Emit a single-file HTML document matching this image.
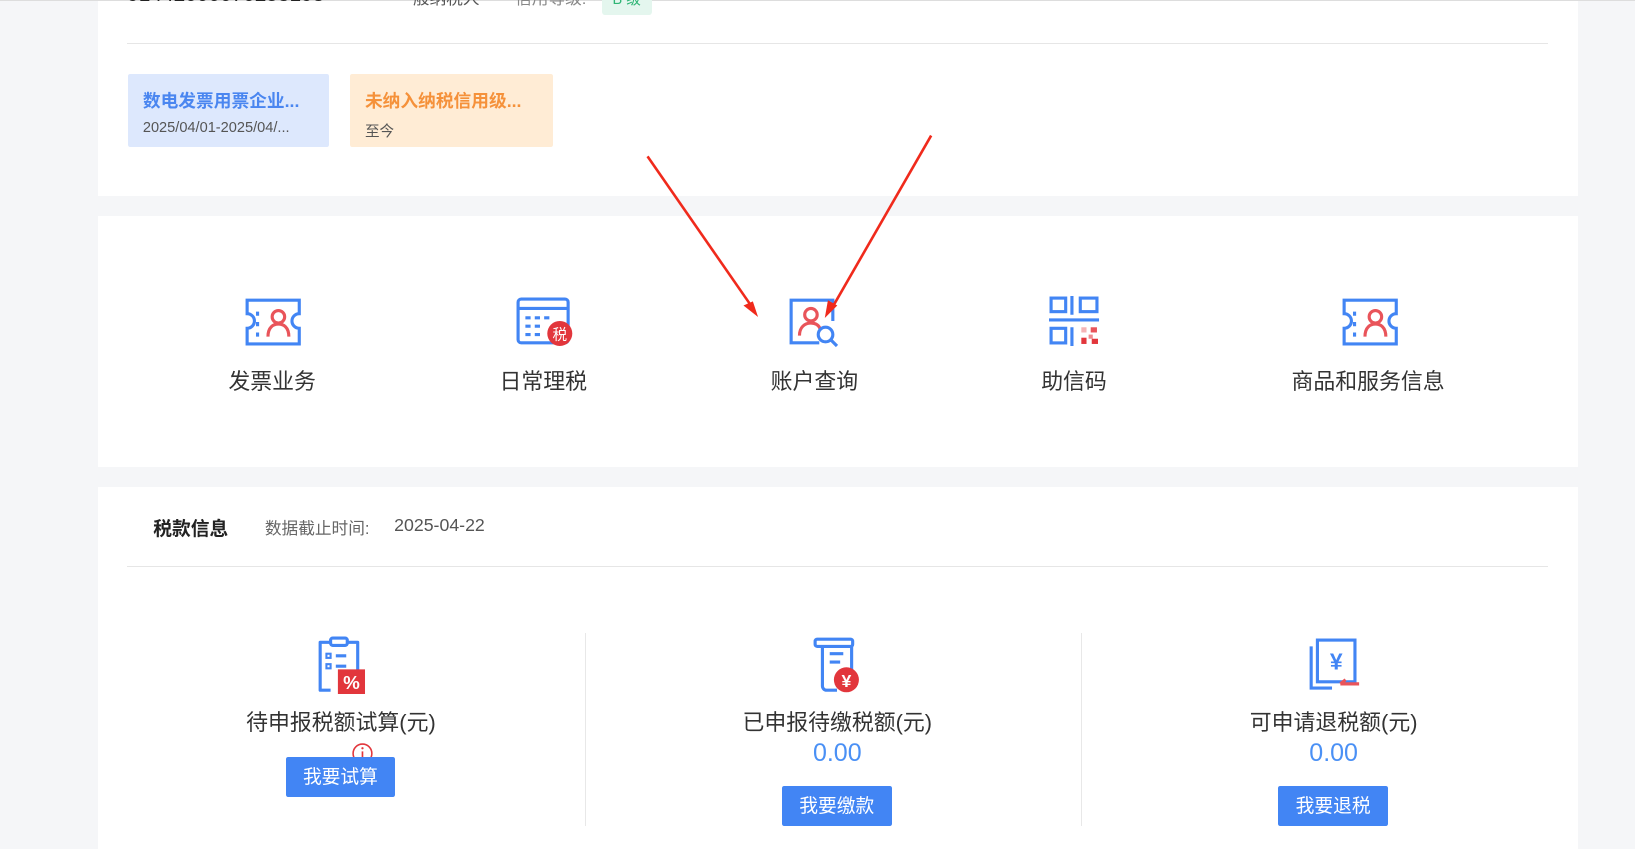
<!DOCTYPE html>
<html><head><meta charset="utf-8"><style>
html,body{margin:0;padding:0;background:#f5f6f8;overflow:hidden}
body{width:1635px;height:849px}
#w{zoom:1.04273;position:relative;width:1568px;height:814px;font-family:"Liberation Sans","Noto Sans CJK SC",sans-serif;color:#333}
.p{position:absolute;left:94px;width:1419px;background:#fff}
.a{position:absolute}
.lbl{position:absolute;font-size:21px;color:#333;text-align:center;width:200px}
.btn{position:absolute;background:#4285f4;color:#fff;font-size:18px;width:105px;height:38px;line-height:38px;text-align:center;border-radius:2px}
.num{position:absolute;color:#4a90f5;font-size:24px;width:200px;text-align:center}
</style></head><body><div id="w">
<div style="position:absolute;left:0;top:0;width:1568px;height:1px;background:#ddd"></div>
<div class="p" style="top:1px;height:187px">
 <div class="a" style="left:28px;top:-17px;font-size:20px;color:#222">91442000070253193</div>
 <div class="a" style="left:286px;top:-15px;font-size:16px;color:#555">一般纳税人</div>
 <div class="a" style="left:400px;top:-15px;font-size:16px;color:#888">信用等级:</div>
 <div class="a" style="left:483px;top:-6px;width:48px;height:19px;background:#e4f6ee;border-radius:3px;color:#2fb575;font-size:14px;text-align:center;line-height:10px">B 级</div>
 <div class="a" style="left:28px;top:40px;width:1363px;height:1px;background:#e6e6e6"></div>
 <div class="a" style="left:29px;top:70px;width:193px;height:70px;background:#dde8fd;border-radius:2px">
  <div class="a" style="left:14px;top:12px;font-size:17px;font-weight:bold;color:#4a86f0">数电发票用票企业...</div>
  <div class="a" style="left:14px;top:44px;font-size:14px;color:#555">2025/04/01-2025/04/...</div></div>
 <div class="a" style="left:242px;top:70px;width:194px;height:70px;background:#ffecd5;border-radius:2px">
  <div class="a" style="left:14px;top:12px;font-size:17px;font-weight:bold;color:#f5913a">未纳入纳税信用级...</div>
  <div class="a" style="left:14px;top:44px;font-size:14px;color:#555">至今</div></div>
</div>
<div class="p" style="top:207px;height:241px">
 <svg class="a" style="left:140px;top:78px" width="56" height="48" viewBox="0 0 56 48"><path d="M3 3h50v13a6 6 0 0 0 0 14v15H3V30a6 6 0 0 0 0-14z" fill="none" stroke="#4285f4" stroke-width="3"/><path d="M13 14v4M13 24v4M13 34v4" stroke="#4285f4" stroke-width="3"/><circle cx="33" cy="19" r="6" fill="none" stroke="#e9545a" stroke-width="3"/><path d="M23 38c0-9 5-12 10-12s10 3 10 12" fill="none" stroke="#e9545a" stroke-width="3"/></svg>
 <div class="lbl" style="left:67px;top:143px">发票业务</div>
 <svg class="a" style="left:401px;top:78px" width="56" height="50" viewBox="0 0 56 50"><rect x="2" y="2" width="48" height="42" rx="3" fill="none" stroke="#4285f4" stroke-width="3"/><path d="M2 11h48" stroke="#4285f4" stroke-width="3"/><path d="M9 20h5M18 20h5M27 20h5M9 28h5M18 28h5M9 36h5M18 36h5" stroke="#4285f4" stroke-width="3"/><circle cx="42" cy="35" r="12" fill="#e2363c"/><text x="42" y="41" font-size="14" fill="#fff" text-anchor="middle" font-family="Noto Sans CJK SC">税</text></svg>
 <div class="lbl" style="left:327px;top:143px">日常理税</div>
 <svg class="a" style="left:662px;top:78px" width="52" height="50" viewBox="0 0 52 50"><path d="M30 44H3V3h40v20" fill="none" stroke="#4285f4" stroke-width="3"/><circle cx="22" cy="17" r="6" fill="none" stroke="#e9545a" stroke-width="3"/><path d="M11 37c0-8 5-12 11-12s8 3 9 6" fill="none" stroke="#e9545a" stroke-width="3"/><circle cx="36" cy="36" r="7" fill="none" stroke="#4285f4" stroke-width="3"/><path d="M41 41l6 6" stroke="#4285f4" stroke-width="3"/></svg>
 <div class="lbl" style="left:587px;top:143px">账户查询</div>
 <svg class="a" style="left:912px;top:77px" width="50" height="50" viewBox="0 0 50 50"><rect x="2" y="2" width="14" height="13" fill="none" stroke="#4285f4" stroke-width="3"/><rect x="30" y="2" width="16" height="13" fill="none" stroke="#4285f4" stroke-width="3"/><path d="M22 0v18M22 30v18M0 23h48" stroke="#4285f4" stroke-width="3"/><rect x="2" y="31" width="14" height="14" fill="none" stroke="#4285f4" stroke-width="3"/><rect x="31" y="30" width="5" height="5" fill="#f5b4b6"/><rect x="40" y="30" width="6" height="5" fill="#e9545a"/><rect x="31" y="40" width="5" height="6" fill="#e2363c"/><rect x="38" y="37" width="4" height="4" fill="#f08a8e"/><rect x="41" y="41" width="6" height="5" fill="#e2363c"/></svg>
 <div class="lbl" style="left:836px;top:143px">助信码</div>
 <svg class="a" style="left:1192px;top:78px" width="56" height="48" viewBox="0 0 56 48"><path d="M3 3h50v13a6 6 0 0 0 0 14v15H3V30a6 6 0 0 0 0-14z" fill="none" stroke="#4285f4" stroke-width="3"/><path d="M13 14v4M13 24v4M13 34v4" stroke="#4285f4" stroke-width="3"/><circle cx="33" cy="19" r="6" fill="none" stroke="#e9545a" stroke-width="3"/><path d="M23 38c0-9 5-12 10-12s10 3 10 12" fill="none" stroke="#e9545a" stroke-width="3"/></svg>
 <div class="lbl" style="left:1118px;top:143px">商品和服务信息</div>
</div>
<div class="p" style="top:467px;height:347px">
 <div class="a" style="left:53px;top:26px;font-size:18px;font-weight:bold;color:#222">税款信息</div>
 <div class="a" style="left:160px;top:27px;font-size:16px;color:#666">数据截止时间:</div>
 <div class="a" style="left:284px;top:27px;font-size:17px;color:#555">2025-04-22</div>
 <div class="a" style="left:28px;top:76px;width:1363px;height:1px;background:#e6e6e6"></div>
 <div class="a" style="left:467px;top:140px;width:1px;height:185px;background:#e8e8e8"></div>
 <div class="a" style="left:943px;top:140px;width:1px;height:185px;background:#e8e8e8"></div>
 <svg class="a" style="left:209px;top:143px" width="48" height="56" viewBox="0 0 48 56"><path d="M14 52H4V6h36v30" fill="none" stroke="#4285f4" stroke-width="3" stroke-linejoin="round"/><rect x="14" y="2" width="16" height="7" rx="2" fill="#fff" stroke="#4285f4" stroke-width="3"/><rect x="10" y="17" width="4" height="4" fill="none" stroke="#4285f4" stroke-width="2"/><rect x="10" y="27" width="4" height="4" fill="none" stroke="#4285f4" stroke-width="2"/><path d="M19 19h10M19 29h10" stroke="#4285f4" stroke-width="3"/><rect x="21" y="32" width="26" height="24" fill="#e2363c"/><text x="34" y="51" font-size="18" fill="#fff" text-anchor="middle" font-weight="bold">%</text></svg>
 <div class="lbl" style="left:133px;top:210px;width:200px">待申报税额试算(元)</div>
 <svg class="a" style="left:243px;top:245px" width="22" height="22"><circle cx="11" cy="11" r="9" fill="none" stroke="#e2363c" stroke-width="1.5"/><path d="M11 9v7" stroke="#e2363c" stroke-width="1.6"/><circle cx="11" cy="6" r="1.1" fill="#e2363c"/></svg>
 <div class="btn" style="left:180px;top:259px">我要试算</div>
 <svg class="a" style="left:685px;top:143px" width="48" height="56" viewBox="0 0 48 56"><path d="M10 8v40a4 4 0 0 0 4 4h10M10 8h28v26" fill="none" stroke="#4285f4" stroke-width="3" stroke-linejoin="round"/><rect x="3" y="3" width="36" height="7" rx="2" fill="#fff" stroke="#4285f4" stroke-width="3"/><path d="M17 17h13M17 25h10" stroke="#4285f4" stroke-width="3"/><circle cx="33" cy="42" r="12" fill="#e2363c"/><text x="33" y="49" font-size="17" fill="#fff" text-anchor="middle" font-weight="bold">¥</text></svg>
 <div class="lbl" style="left:609px;top:210px">已申报待缴税额(元)</div>
 <div class="num" style="left:609px;top:242px">0.00</div>
 <div class="btn" style="left:656px;top:287px">我要缴款</div>
 <svg class="a" style="left:1159px;top:145px" width="54" height="52" viewBox="0 0 54 52"><path d="M4 8v40h20" fill="none" stroke="#4285f4" stroke-width="3"/><rect x="10" y="2" width="36" height="40" fill="none" stroke="#4285f4" stroke-width="3"/><text x="28" y="30" font-size="22" fill="#4285f4" text-anchor="middle" font-weight="bold">¥</text><path d="M32 44h18M32 44l5-4" stroke="#e9545a" stroke-width="3"/></svg>
 <div class="lbl" style="left:1085px;top:210px">可申请退税额(元)</div>
 <div class="num" style="left:1085px;top:242px">0.00</div>
 <div class="btn" style="left:1132px;top:287px">我要退税</div>
</div>
<svg class="a" style="left:0;top:0" width="1568" height="814"><path d="M621 150L723 297" stroke="#f02a1c" stroke-width="2.5"/><path d="M727 304l-14-11 9-4z" fill="#f02a1c"/><path d="M893 130L797 297" stroke="#f02a1c" stroke-width="2.5"/><path d="M791 305l3-17 9 5z" fill="#f02a1c"/></svg>
</div></body></html>
